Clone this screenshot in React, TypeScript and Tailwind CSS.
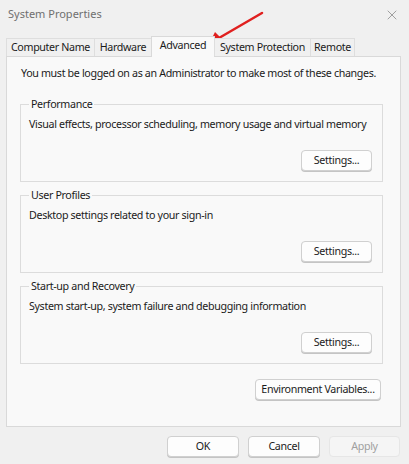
import { X } from 'lucide-react';

const tabs = [
    { label: 'Computer Name', w: 'w-[89px]' },
    { label: 'Hardware', w: 'w-[58px]' },
    { label: 'Advanced', w: 'w-[64px]', active: true },
    { label: 'System Protection', w: 'w-[97px]' },
    { label: 'Remote', w: 'w-[45px]' },
];

const groups = [
    { title: 'Performance', text: 'Visual effects, processor scheduling, memory usage and virtual memory' },
    { title: 'User Profiles', text: 'Desktop settings related to your sign-in' },
    { title: 'Start-up and Recovery', text: 'System start-up, system failure and debugging information' },
];

function Button({ label, className = '', disabled = false }: { label: string; className?: string; disabled?: boolean }) {
    return (
        <button
            className={`h-[21px] rounded-[4px] border text-[10.7px] tracking-[-0.35px] leading-none whitespace-nowrap ${
                disabled ? 'border-[#e6e6e6] bg-[#f5f5f5] text-[#a0a0a0]' : 'border-[#d0d0d0] bg-[#fdfdfd] text-[#1b1b1b] shadow-[0_1px_0_#c4c4c4]'
            } ${className}`}
        >
            {label}
        </button>
    );
}

export default function App() {
    return (
        <div className="relative w-[409px] h-[464px] bg-[#f0f0f0] flex flex-col font-['Noto_Sans',sans-serif] text-[#1b1b1b] overflow-hidden whitespace-nowrap">
            {/* title bar */}
            <div className="h-[37px] flex items-start justify-between pl-[8px] pr-[9px] pt-[6px]">
                <span className="text-[11px] text-[#6f6f6f]">System Properties</span>
                <X className="w-[16px] h-[16px] mt-[1px] text-[#8a8a8a]" strokeWidth={1.2} />
            </div>

            {/* tabs */}
            <div className="h-[19px] flex items-end pl-[6px] relative z-10 text-[10.7px] tracking-[-0.35px]">
                {tabs.map((t) =>
                    t.active ? (
                        <div
                            key={t.label}
                            className={`${t.w} h-[21px] -mb-px -ml-px bg-[#f9f9f9] border border-b-0 border-[#d9d9d9] flex items-center justify-center pb-[3px]`}
                        >
                            {t.label}
                        </div>
                    ) : (
                        <div
                            key={t.label}
                            className={`${t.w} h-[18px] bg-[#f0f0f0] border border-b-0 border-[#dedede] -ml-px first:ml-0 flex items-center justify-center`}
                        >
                            {t.label}
                        </div>
                    )
                )}
            </div>

            {/* panel */}
            <div className="ml-[6px] mr-[8px] h-[371px] bg-[#f9f9f9] border border-[#d9d9d9] flex flex-col text-[10.7px] tracking-[-0.35px]">
                <p className="pl-[14px] pt-[8px] leading-[16px]">You must be logged on as an Administrator to make most of these changes.</p>

                <div className="flex flex-col gap-[6px] mt-[16px] pl-[13px]">
                    {groups.map((g) => (
                        <fieldset key={g.title} className="min-w-0 w-[363px] h-[85px] border border-[#dcdcdc] pl-[8px] pr-[10px]">
                            <legend className="px-[2px] leading-[14px]">{g.title}</legend>
                            <p className="mt-[5px] leading-[16px]">{g.text}</p>
                            <div className="flex justify-end mt-[18px]">
                                <Button label="Settings..." className="w-[71px]" />
                            </div>
                        </fieldset>
                    ))}
                </div>

                <div className="flex justify-end pr-[19px] mt-[15px]">
                    <Button label="Environment Variables..." className="w-[126px]" />
                </div>
            </div>

            {/* bottom buttons */}
            <div className="flex justify-end gap-[9px] pr-[9px] mt-[9px]">
                <Button label="OK" className="w-[72px]" />
                <Button label="Cancel" className="w-[72px]" />
                <Button label="Apply" className="w-[71px]" disabled />
            </div>

            {/* red annotation arrow */}
            <svg className="absolute left-0 top-0 pointer-events-none" width="409" height="464">
                <line x1="262" y1="13" x2="219" y2="38" stroke="#e0201f" strokeWidth="2.5" strokeLinecap="round" />
                <polygon points="209,44 215,32 224,41" fill="#e0201f" />
            </svg>
        </div>
    );
}
